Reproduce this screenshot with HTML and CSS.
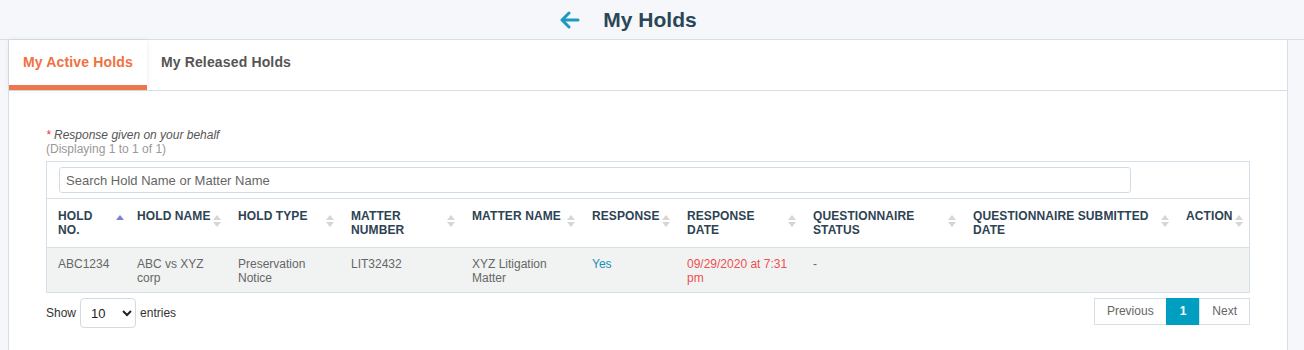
FILE: index.html
```html
<!DOCTYPE html>
<html>
<head>
    <meta charset="UTF-8">
    <title>My Holds</title>
    <link rel="stylesheet" href="styles.css">
</head>
<body>
<header class="topbar">
    <a class="back" href="#">
        <svg width="21" height="18" viewBox="0 0 21 18"><path d="M19 9H3M10 2L3 9l7 7" fill="none" stroke="#1b9bc2" stroke-width="3" stroke-linecap="round" stroke-linejoin="round"/></svg>
    </a>
    <h1 class="title">My Holds</h1>
    <span></span>
</header>

<section class="panel">
    <div class="tabs">
        <div class="tab active">My Active Holds</div>
        <div class="tab">My Released Holds</div>
    </div>

    <div class="content">
        <p class="note"><span class="star">*</span> Response given on your behalf</p>
        <p class="count">(Displaying 1 to 1 of 1)</p>

        <div class="grid">
            <div class="search">
                <input type="text" placeholder="Search Hold Name or Matter Name"/>
            </div>
            <table class="holds">
                <colgroup>
                    <col style="width:79px">
                    <col style="width:101px">
                    <col style="width:113px">
                    <col style="width:121px">
                    <col style="width:120px">
                    <col style="width:95px">
                    <col style="width:126px">
                    <col style="width:160px">
                    <col style="width:213px">
                    <col>
                </colgroup>
                <thead>
                <tr>
                    <th class="sorted">HOLD<br>NO.</th>
                    <th>HOLD NAME</th>
                    <th>HOLD TYPE</th>
                    <th>MATTER<br>NUMBER</th>
                    <th>MATTER NAME</th>
                    <th>RESPONSE</th>
                    <th>RESPONSE<br>DATE</th>
                    <th>QUESTIONNAIRE<br>STATUS</th>
                    <th>QUESTIONNAIRE SUBMITTED<br>DATE</th>
                    <th>ACTION</th>
                </tr>
                </thead>
                <tbody>
                <tr>
                    <td>ABC1234</td>
                    <td>ABC vs XYZ<br>corp</td>
                    <td>Preservation<br>Notice</td>
                    <td>LIT32432</td>
                    <td>XYZ Litigation<br>Matter</td>
                    <td class="yes">Yes</td>
                    <td class="date">09/29/2020 at 7:31<br>pm</td>
                    <td>-</td>
                    <td></td>
                    <td></td>
                </tr>
                </tbody>
            </table>
        </div>

        <div class="footer">
            <label class="length">Show
                <select><option>10</option><option>25</option></select>
                entries</label>
            <div class="pager">
                <a href="#" class="page">Previous</a>
                <a href="#" class="page current">1</a>
                <a href="#" class="page">Next</a>
            </div>
        </div>
    </div>
</section>
</body>
</html>
```

FILE: styles.css
```css
* {
    margin: 0;
    padding: 0;
    box-sizing: border-box;
    font-family: "Liberation Sans", Arial, sans-serif;
}

a {
    text-decoration: none;
}

html, body {
    width: 100%;
    overflow: hidden;
    background: #f5f7fa;
    color: #555;
    font-size: 12px;
}

.topbar {
    display: grid;
    grid-template-columns: 1fr auto 1fr;
    align-items: center;
    height: 40px;
    padding-right: 4px;
    border-bottom: 1px solid #d6e0e8;
}

.back {
    justify-self: end;
    display: flex;
    margin-right: 23px;
    padding-top: 1px;
}

.title {
    font-size: 21px;
    font-weight: bold;
    color: #2b4656;
}

.panel {
    margin: 0 16px 0 8px;
    height: 320px;
    background: #fff;
    border-left: 1px solid #d6e0e8;
    border-right: 1px solid #d6e0e8;
}

.tabs {
    display: flex;
    height: 51px;
    border-bottom: 1px solid #d6e0e8;
}

.tab {
    padding: 0 14px;
    line-height: 45px;
    white-space: nowrap;
    font-size: 14px;
    font-weight: bold;
    color: #555;
    letter-spacing: 0.15px;
    border-bottom: 5px solid transparent;
}

.tab.active {
    color: #f1703f;
    border-bottom-color: #ee764b;
    box-shadow: 0 0 6px rgba(0, 0, 0, 0.08);
}

.content {
    padding: 37px 37px 0 37px;
}

.note {
    font-style: italic;
    color: #555;
    line-height: 14px;
}

.star {
    color: #e33;
}

.count {
    color: #999;
    line-height: 14px;
}

.grid {
    margin-top: 5px;
    border: 1px solid #d6e0e8;
}

.search {
    padding: 5px 118px 5px 12px;
    border-bottom: 1px solid #d6e0e8;
}

.search input {
    display: block;
    width: 100%;
    height: 26px;
    padding: 0 6px;
    border: 1px solid #d2dbe2;
    border-radius: 3px;
    font-size: 13px;
    color: #555;
    outline: none;
}

.search input::placeholder {
    color: #666;
}

.holds {
    width: 100%;
    table-layout: fixed;
    border-collapse: collapse;
}

.holds th {
    position: relative;
    height: 48px;
    padding: 10px 14px 0 11px;
    vertical-align: top;
    text-align: left;
    font-size: 12px;
    line-height: 14px;
    color: #2d4353;
    letter-spacing: 0.1px;
    border-bottom: 1px solid #d6e0e8;
}

.holds th::before, .holds th::after {
    content: "";
    position: absolute;
    right: 6px;
    border-left: 4px solid transparent;
    border-right: 4px solid transparent;
}

.holds th::before {
    top: 16px;
    border-bottom: 5px solid #d6d6d6;
}

.holds th::after {
    top: 23px;
    border-top: 5px solid #d6d6d6;
}

.holds th.sorted::before {
    border-bottom-color: #7d7fd6;
    right: 2px;
}

.holds th.sorted::after {
    display: none;
}

.holds td {
    height: 45px;
    padding: 9px 10px 0 11px;
    vertical-align: top;
    line-height: 14px;
    background: #f1f3f3;
    color: #666;
}

.holds td.yes {
    color: #1b8fb8;
}

.holds td.date {
    color: #ee4f4f;
}

.footer {
    display: flex;
    justify-content: space-between;
    align-items: flex-start;
    margin-top: 5px;
}

.length {
    display: flex;
    align-items: center;
    gap: 4px;
    color: #333;
}

.length select {
    width: 56px;
    height: 30px;
    padding: 0 6px;
    border: 1px solid #d2dbe2;
    border-radius: 4px;
    background: #fff;
    font-size: 13px;
    color: #222;
}

.pager {
    display: flex;
}

.page {
    height: 27px;
    line-height: 25px;
    padding: 0 12px;
    border: 1px solid #d6e0e8;
    color: #666;
    font-size: 12px;
}

.page + .page {
    margin-left: -1px;
}

.page.current {
    padding: 0 13px;
    background: #009fc2;
    border-color: #009fc2;
    color: #fff;
    font-weight: bold;
}
```
